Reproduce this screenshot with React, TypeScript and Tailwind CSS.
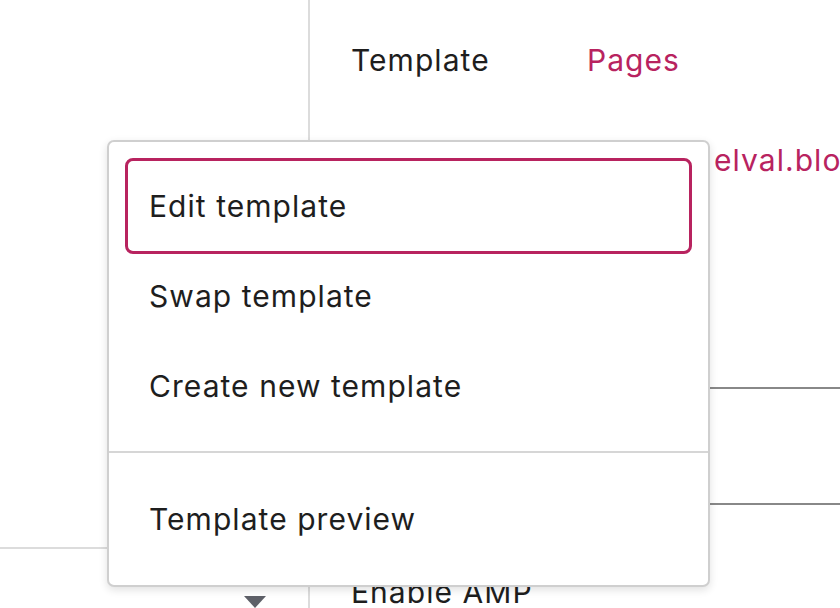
import React from 'react';

const menuGroups = [
    ['Edit template', 'Swap template', 'Create new template'],
    ['Template preview'],
];

function TemplateMenu() {
    return (
        <div className="absolute left-[107px] top-[140px] w-[603px] bg-white border-2 border-[#cfcfcf] rounded-[7px] shadow-[0_3px_8px_rgba(0,0,0,0.12)]">
            {menuGroups.map((group, gi) => (
                <div
                    key={gi}
                    className={
                        gi > 0
                            ? 'border-t-2 border-[#d6d6d6] px-[19px] pt-[21px] pb-[21px]'
                            : 'px-[19px] pt-[19px] pb-[20px]'
                    }
                >
                    {group.map((label, i) => (
                        <div
                            key={label}
                            className={
                                gi === 0 && i === 0
                                    ? 'h-[90px] flex items-center px-[21px] rounded-[5px] outline-[3px] outline-solid outline-[#b8235f] text-[#1e1e1e]'
                                    : 'h-[90px] flex items-center px-[21px] text-[#1e1e1e]'
                            }
                        >
                            {label}
                        </div>
                    ))}
                </div>
            ))}
        </div>
    );
}

export default function App() {
    return (
        <div
            className="relative w-[840px] h-[608px] overflow-hidden bg-white text-[30px] leading-none tracking-[0.035em]"
            style={{ fontFamily: 'Inter, "Noto Sans", sans-serif' }}
        >
            <div className="flex h-full">
                {/* left sidebar column */}
                <div className="w-[310px] shrink-0 border-r-2 border-[#dcdcdc] flex flex-col">
                    <div className="h-[549px] border-b-2 border-[#dcdcdc]"></div>
                    <div className="flex-1 pt-[47px] pl-[244px]">
                        <svg width="22" height="12" viewBox="0 0 22 12" className="block">
                            <path d="M0 0 L22 0 L11 12 Z" fill="#5e6068" />
                        </svg>
                    </div>
                </div>

                {/* summary panel */}
                <div className="flex-1 flex flex-col">
                    <div className="h-[120px] flex items-center pl-[41px] text-[#1e1e1e]">
                        <span className="w-[236px]">Template</span>
                        <span className="text-[#b8235f]">Pages</span>
                    </div>
                    <div className="h-[80px] flex items-center pl-[404px] text-[#b8235f] whitespace-nowrap">
                        elval.blog
                    </div>
                    <div className="h-[189px] border-b-2 border-[#888]"></div>
                    <div className="h-[116px] border-b-2 border-[#888]"></div>
                    <div className="flex-1 pl-[41px] pt-[72px] text-[#1e1e1e] whitespace-nowrap">
                        Enable AMP
                    </div>
                </div>
            </div>

            <TemplateMenu />
        </div>
    );
}
